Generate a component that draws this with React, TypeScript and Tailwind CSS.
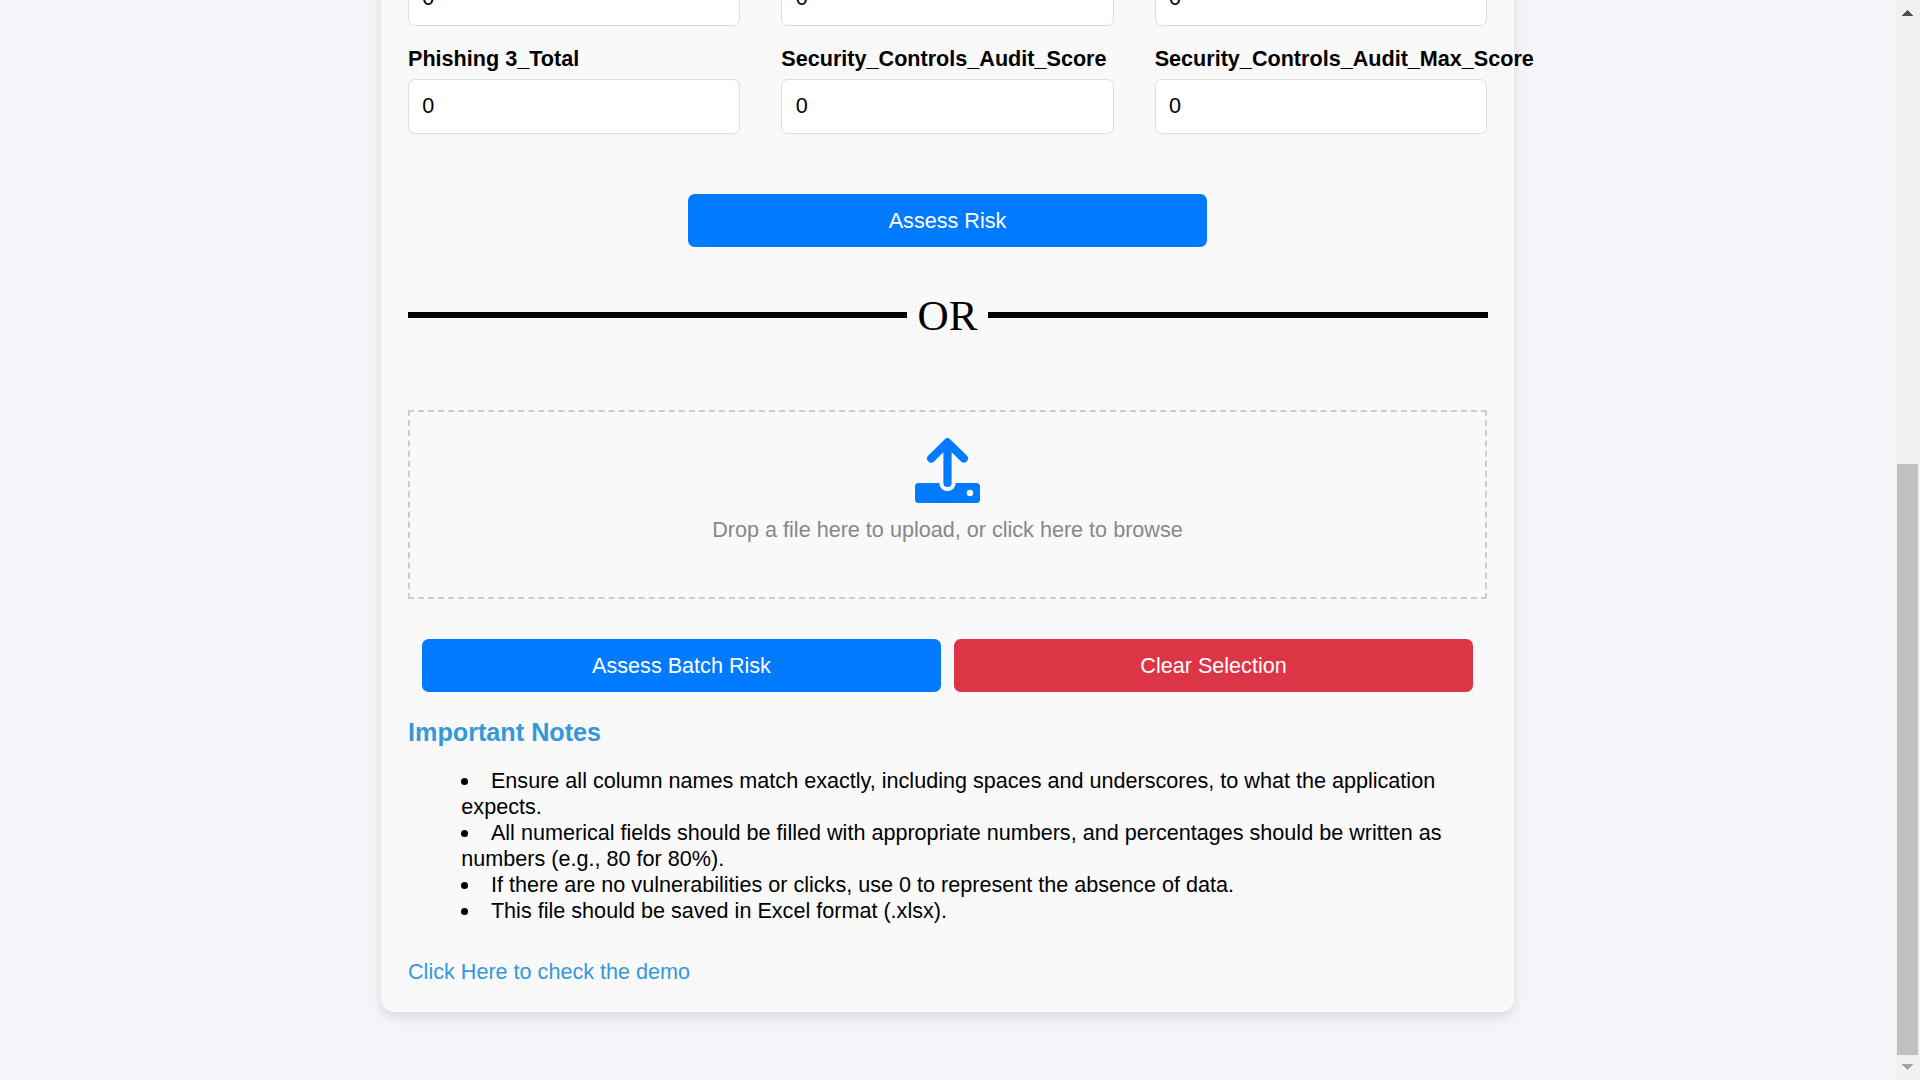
const fields = [
  'Phishing 3_Total',
  'Security_Controls_Audit_Score',
  'Security_Controls_Audit_Max_Score',
];

const notes = [
  'Ensure all column names match exactly, including spaces and underscores, to what the application expects.',
  'All numerical fields should be filled with appropriate numbers, and percentages should be written as numbers (e.g., 80 for 80%).',
  'If there are no vulnerabilities or clicks, use 0 to represent the absence of data.',
  'This file should be saved in Excel format (.xlsx).',
];

function NumberInput() {
  return (
    <input
      type="text"
      defaultValue="0"
      className="block h-[55px] w-full rounded-[6.67px] border border-[#dddddd] bg-white px-[13.33px] pb-[2px] text-[21.6px] text-black outline-none"
    />
  );
}

function UploadIcon() {
  return (
    <svg width="67" height="67" viewBox="0 0 67 67" fill="none">
      <path
        d="M4.500 46H25.300a8.200 8.200 0 0 0 16.400 0h20.800a3.500 3.500 0 0 1 3.500 3.500v13a3.500 3.500 0 0 1-3.500 3.500h-58a3.500 3.500 0 0 1-3.500-3.500v-13a3.500 3.500 0 0 1 3.500-3.500Z"
        fill="#007bff"
      />
      <circle cx="56" cy="56" r="3.200" fill="#f9f9f9" />
      <path
        d="M33.500 46V6M17.200 21.500 33.500 5.400 49.900 21.500"
        stroke="#007bff"
        strokeWidth="8.200"
        strokeLinecap="round"
        strokeLinejoin="round"
      />
    </svg>
  );
}

function ActionButton({ label, tone }: { label: string; tone: 'blue' | 'red' }) {
  return (
    <button
      className={
        tone === 'blue'
          ? 'h-[53px] w-[519px] rounded-[6.67px] bg-[#007bff] text-[21.6px] text-white'
          : 'h-[53px] w-[519px] rounded-[6.67px] bg-[#dc3545] text-[21.6px] text-white'
      }
    >
      {label}
    </button>
  );
}

function Scrollbar() {
  return (
    <div className="flex w-[25px] flex-col items-center justify-between bg-[#f1f1f1] pt-[10px] pb-[10px]">
      <svg width="11" height="6" viewBox="0 0 11 6" shapeRendering="crispEdges">
        <path d="M5.500 0 11 6H0Z" fill="#505050" />
      </svg>
      <div className="mt-auto mb-[9px] h-[591px] w-[21px] bg-[#c1c1c1]" />
      <svg width="11" height="6" viewBox="0 0 11 6" shapeRendering="crispEdges">
        <path d="M0 0H11L5.500 6Z" fill="#a3a3a3" />
      </svg>
    </div>
  );
}

export default function App() {
  return (
    <div className="flex h-[1080px] w-[1920px] overflow-hidden bg-[#f4f4f9] font-['Liberation_Sans',Arial,sans-serif] text-[21.6px] leading-[26px] text-black">
      <main className="flex flex-1 justify-center">
        <section className="-mt-[29px] h-[1041px] w-[1133px] rounded-b-[13.33px] bg-[#f9f9f9] px-[27px] shadow-[0_5.33px_10.67px_rgba(0,0,0,0.1)]">
          <div className="grid grid-cols-3 gap-x-[41px]">
            {fields.map((name) => (
              <div key={name} className="min-w-0">
                <NumberInput />
                <label className="mt-[20px] mb-[7px] block whitespace-nowrap font-bold">{name}</label>
                <NumberInput />
              </div>
            ))}
          </div>

          <div className="mt-[60px] flex justify-center">
            <ActionButton label="Assess Risk" tone="blue" />
          </div>

          <div className="-mr-px mt-[43px] flex h-[50px] items-center justify-between font-['Liberation_Serif','Times_New_Roman',serif] text-[43.2px] leading-[50px]">
            <div className="h-[6px] w-[499px] bg-black" />
            <span className="pt-[2px]">OR</span>
            <div className="h-[6px] w-[500px] bg-black" />
          </div>

          <div className="mt-[70px] flex h-[189px] flex-col items-center border-2 border-dashed border-[#cccccc] pt-[25px]">
            <UploadIcon />
            <p className="mt-[13px] text-[#888888]">Drop a file here to upload, or click here to browse</p>
          </div>

          <div className="mt-[40px] flex justify-center gap-[13px]">
            <ActionButton label="Assess Batch Risk" tone="blue" />
            <ActionButton label="Clear Selection" tone="red" />
          </div>

          <h2 className="mt-[25px] text-[25.2px] leading-[30px] font-bold text-[#3498db]">Important Notes</h2>
          <ul className="mt-[21px] list-inside list-disc pr-[26px] pl-[53.33px]">
            {notes.map((note) => (
              <li key={note}>{note}</li>
            ))}
          </ul>
          <a className="mt-[35px] block text-[#3498db]">Click Here to check the demo</a>
        </section>
      </main>
      <Scrollbar />
    </div>
  );
}
